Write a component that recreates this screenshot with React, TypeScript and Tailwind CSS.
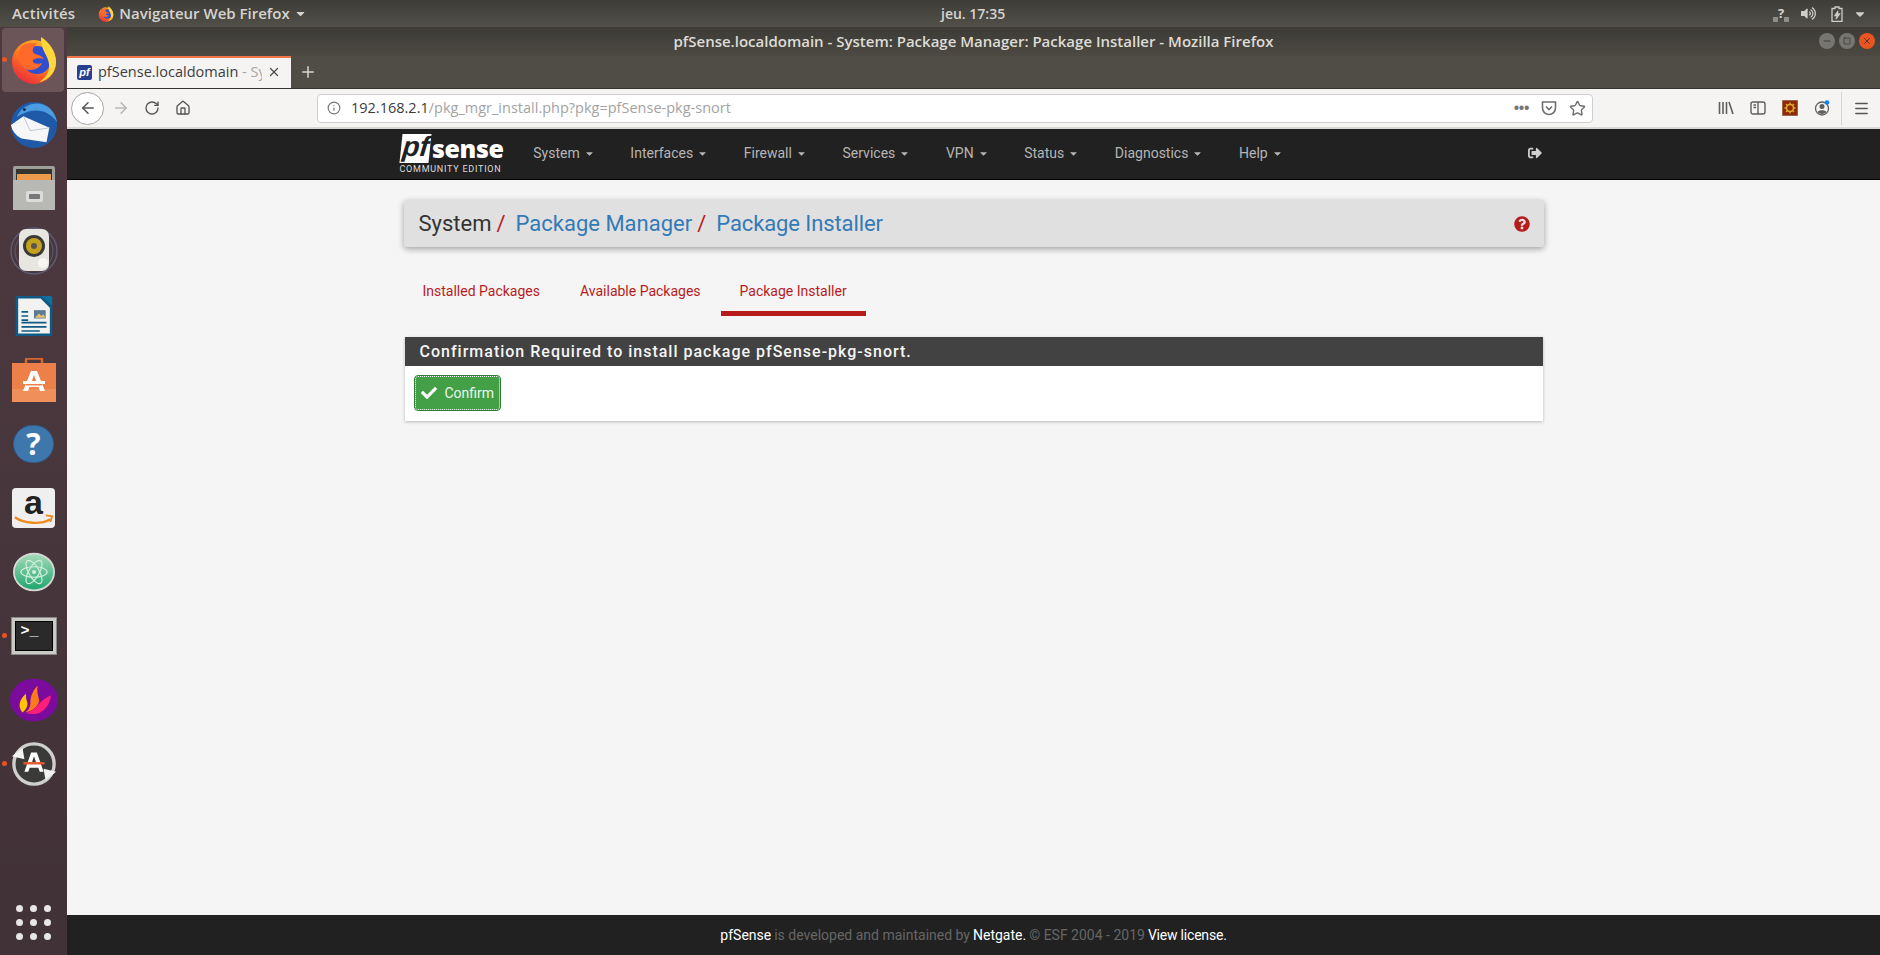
import { ArrowLeft, ArrowRight, RotateCw, Home, Info, Star, Minus, Square, X, Plus, Menu } from "lucide-react";
import { FaCheck, FaQuestionCircle, FaSignOutAlt, FaVolumeUp, FaCaretDown } from "react-icons/fa";

const NAV = ["System", "Interfaces", "Firewall", "Services", "VPN", "Status", "Diagnostics", "Help"];

function FirefoxIcon({ size = 48 }: { size?: number }) {
  const id = `ff${size}`;
  return (
    <svg width={size} height={size} viewBox="0 0 48 48">
      <defs>
        <linearGradient id={id} x1="0.8" y1="0" x2="0.2" y2="1">
          <stop offset="0" stopColor="#ffb52e" />
          <stop offset="0.5" stopColor="#ff7a1f" />
          <stop offset="1" stopColor="#e8243f" />
        </linearGradient>
      </defs>
      <circle cx="24" cy="26" r="22" fill={`url(#${id})`} />
      <circle cx="27" cy="24" r="14" fill="#2f4fd0" />
      <path d="M12 10c5-3 10-4 15-2-3 2-5 5-4 8 1 3 8 2 11 7-3-1-9-1-11 1-1 3 4 5 9 3-2 6-13 10-19 4-6-6-6-15-1-21z" fill="#ff6a2a" />
      <path d="M31 1c8 5 15 14 15 25 0 10-7 18-17 20 7-4 11-10 10-18-1-9-9-15-8-27z" fill="#ffd73b" />
    </svg>
  );
}

function ThunderbirdIcon() {
  return (
    <svg width="48" height="48" viewBox="0 0 50 50">
      <circle cx="25" cy="26" r="24" fill="#1e5aa8" />
      <path d="M7 18c4-10 14-16 25-14 9 2 15 9 17 19-6-8-13-12-22-12-7 0-14 3-20 7z" fill="#4a9be0" />
      <path d="M1 26l13-9 27 12-3 15-26-4c-6-3-10-8-11-14z" fill="#f7f7f7" />
      <path d="M14 17l7 15 20-3" fill="none" stroke="#b9c4d0" strokeWidth="1" />
      <circle cx="15" cy="10" r="1.500" fill="#10233f" />
    </svg>
  );
}

function FilesIcon() {
  return (
    <svg width="42" height="44" viewBox="0 0 42 44">
      <rect x="0" y="0" width="42" height="44" rx="2" fill="#9e9e9b" />
      <rect x="3" y="3" width="36" height="14" fill="#35342f" />
      <rect x="4" y="8" width="34" height="9" fill="#ee9a4d" />
      <rect x="0" y="14" width="42" height="30" rx="1" fill="#b8b8b5" />
      <rect x="13" y="25" width="17" height="11" rx="2" fill="#dcdcda" />
      <rect x="16" y="28" width="11" height="5" rx="1" fill="#77777a" />
    </svg>
  );
}

function RhythmboxIcon() {
  return (
    <svg width="50" height="50" viewBox="0 0 50 50">
      <circle cx="25" cy="24" r="23" fill="none" stroke="#5d5c72" strokeWidth="1.500" />
      <circle cx="25" cy="24" r="19" fill="none" stroke="#5d5c72" strokeWidth="1" />
      <rect x="10" y="2" width="30" height="42" rx="7" fill="#e7e6e0" />
      <circle cx="25" cy="19" r="11" fill="#3a3a36" />
      <circle cx="25" cy="19" r="8" fill="#c5a21e" />
      <circle cx="25" cy="19" r="3" fill="#56564f" />
      <circle cx="34" cy="36" r="5" fill="#f7f7f4" />
    </svg>
  );
}

function WriterIcon() {
  return (
    <svg width="40" height="50" viewBox="0 0 48 52">
      <path d="M2 2h32l12 12v34a2 2 0 0 1-2 2H2z" fill="#0f5b85" />
      <path d="M5 5h27l11 11v31H5z" fill="#f2f2f0" />
      <path d="M33 2h11a2 2 0 0 1 2 2v10z" fill="#0f6f9f" />
      <rect x="24" y="19" width="14" height="10" fill="#5b7a95" />
      <path d="M25 28l5-5 3 3 2-2 3 4z" fill="#e8c26f" />
      <path d="M9 20h8v2H9zM9 25h8v2H9zM9 30h8v2H9zM9 33h30v2H9zM9 38h30v2H9zM9 43h22v2H9z" fill="#0f5b85" />
    </svg>
  );
}

function SoftwareIcon() {
  return (
    <svg width="44" height="44" viewBox="0 0 44 44">
      <path d="M14 7V2a1.500 1.500 0 0 1 1.500-1.500h13A1.500 1.500 0 0 1 30 2v5" fill="none" stroke="#d8652b" strokeWidth="2.500" />
      <rect x="0" y="5" width="44" height="39" fill="#ec8048" />
      <rect x="0" y="31" width="44" height="13" fill="#f08f5a" />
      <path fillRule="evenodd" d="M19 13h6l8 20h-5l-1.500-4h-9L16 33h-5zM22 17l-2.500 7h5z" fill="#fff" />
      <rect x="11" y="23" width="22" height="3" fill="#fff" />
      <rect x="14" y="26" width="16" height="1.500" fill="#ec8048" />
    </svg>
  );
}

function HelpIcon() {
  return (
    <div className="w-[41px] h-[38px] rounded-full bg-[#3e77ac] border border-[#2d5d8f] flex items-center justify-center">
      <span className="text-white font-bold text-[30px] leading-none font-['Open_Sans',sans-serif]">?</span>
    </div>
  );
}

function AmazonIcon() {
  return (
    <div className="relative w-[43px] h-[40px] rounded-sm bg-[#efefef] flex justify-center">
      <span className="text-[#222] font-bold text-[34px] leading-[28px] font-['Liberation_Sans',sans-serif]">a</span>
      <svg className="absolute left-0 bottom-0" width="43" height="14" viewBox="0 0 46 14">
        <path d="M3 3c10 7 28 8 38 2" fill="none" stroke="#f08a1d" strokeWidth="2.500" />
        <path d="M36 1l7 1-2 6" fill="none" stroke="#f08a1d" strokeWidth="2" />
      </svg>
    </div>
  );
}

function AtomIcon() {
  return (
    <svg width="42" height="40" viewBox="0 0 48 44">
      <defs>
        <linearGradient id="atomBg" x1="0" y1="0" x2="0" y2="1">
          <stop offset="0" stopColor="#a7dcb9" />
          <stop offset="1" stopColor="#1da56e" />
        </linearGradient>
      </defs>
      <ellipse cx="24" cy="22" rx="23" ry="21" fill="url(#atomBg)" stroke="#d9d9d4" strokeWidth="2" />
      <g fill="none" stroke="#d5f0df" strokeWidth="1.300">
        <ellipse cx="24" cy="22" rx="15" ry="6" />
        <ellipse cx="24" cy="22" rx="15" ry="6" transform="rotate(60 24 22)" />
        <ellipse cx="24" cy="22" rx="15" ry="6" transform="rotate(-60 24 22)" />
      </g>
      <circle cx="24" cy="22" r="2.200" fill="#d5f0df" />
    </svg>
  );
}

function TerminalIcon() {
  return (
    <div className="w-[46px] h-[38px] bg-[#c9c9c6] p-[3px] border border-[#8a8a88]">
      <div className="w-full h-full bg-[#2a2a2a] border border-black pl-[5px] flex items-start">
        <span className="text-white font-bold text-[15px] leading-[20px] font-['Liberation_Mono',monospace]">&gt;_</span>
      </div>
    </div>
  );
}

function FlameIcon() {
  return (
    <svg width="48" height="44" viewBox="0 0 54 48">
      <ellipse cx="27" cy="24" rx="27" ry="24" fill="#7b0b9c" />
      <path d="M14 38c-6-7-3-15 4-21 0 4 0 6 1 8 2 5-1 10-5 13z" fill="#ffc400" />
      <path d="M16 38c6-2 7-7 7-12 0-6 3-13 8-18 -1 8 1 12 2 17-2 7-9 12-17 13z" fill="#ff7a1a" />
      <path d="M18 39c7-3 11-6 15-11 3-3 9-8 13-9-1 9-6 16-12 19-5 2-10 2-16 1z" fill="#ff1e7a" />
    </svg>
  );
}

function UpdateIcon() {
  return (
    <svg width="46" height="46" viewBox="0 0 48 48">
      <circle cx="24" cy="24" r="20" fill="#3a3a38" />
      <circle cx="24" cy="24" r="21" fill="none" stroke="#cfcfcd" strokeWidth="3.500" />
      <path d="M1 16l11-9 2 12z" fill="#f2f2f0" />
      <path d="M47 32l-11 9-2-12z" fill="#f2f2f0" />
      <path fillRule="evenodd" d="M21 12h6l7 20h-4l-1.500-4h-9L18 32h-4zM24 16l-2 6h4z" fill="#fff" />
      <rect x="13" y="22" width="22" height="2.500" fill="#e9562b" />
    </svg>
  );
}

function PocketIcon() {
  return (
    <svg width="16" height="16" viewBox="0 0 16 16" fill="none" stroke="#6f6f6f" strokeWidth="1.600">
      <path d="M1.500 2h13v6a6.500 6.500 0 0 1-13 0z" />
      <path d="M5 6.500l3 3 3-3" />
    </svg>
  );
}

function LibraryIcon() {
  return (
    <svg width="16" height="16" viewBox="0 0 16 16" stroke="#5f5f5f" strokeWidth="1.600" fill="none">
      <path d="M1.500 2v12M5 2v12M8.500 2v12M11 2l4 12" />
    </svg>
  );
}

function SidebarIcon() {
  return (
    <svg width="16" height="16" viewBox="0 0 16 16" stroke="#5f5f5f" strokeWidth="1.400" fill="none">
      <rect x="1" y="2" width="14" height="12" rx="2" />
      <path d="M8 2v12M3.500 5h2.500M3.500 7.500h2.500" />
    </svg>
  );
}

function ExtensionIcon() {
  return (
    <svg width="16" height="16" viewBox="0 0 16 16">
      <rect width="16" height="16" fill="#8d2a04" stroke="#a9a39a" />
      <circle cx="8" cy="8" r="3.500" fill="none" stroke="#e0a82e" strokeWidth="1.600" />
      <path d="M8 2.500v2M8 11.500v2M2.500 8h2M11.500 8h2M4 4l1.500 1.500M10.500 10.500L12 12M12 4l-1.500 1.500M5.500 10.500L4 12" stroke="#e0a82e" strokeWidth="1.400" />
    </svg>
  );
}

function AccountIcon() {
  return (
    <svg width="16" height="16" viewBox="0 0 16 16" fill="none">
      <circle cx="8" cy="8.500" r="6.500" stroke="#5f5f5f" strokeWidth="1.300" />
      <circle cx="8" cy="6.500" r="2.500" fill="#5f5f5f" />
      <path d="M3.500 12c1.500-2.500 7.500-2.500 9 0-2 2.500-7 2.500-9 0z" fill="#5f5f5f" />
      <circle cx="13" cy="2.500" r="2.300" fill="#0a84ff" />
    </svg>
  );
}

function NetworkIcon() {
  return (
    <div className="relative w-[16px] h-[16px]">
      <div className="absolute left-0 bottom-0 w-[5px] h-[5px] bg-[#8f8e89]" />
      <div className="absolute right-0 bottom-0 w-[5px] h-[5px] bg-[#8f8e89]" />
      <span className="absolute inset-x-0 -top-[1px] text-center text-[13px] leading-[16px] font-bold text-[#d6d4cf]">?</span>
    </div>
  );
}

function PfTabIcon() {
  return (
    <div className="w-[15px] h-[15px] rounded-[2px] bg-[#27408f] flex items-center justify-center shrink-0">
      <span className="text-white font-bold italic text-[11px] leading-none font-['Liberation_Sans',sans-serif]">pf</span>
    </div>
  );
}

function DockItem({ children, active, running }: { children: React.ReactNode; active?: boolean; running?: boolean }) {
  return (
    <div className="relative h-[64px] flex items-center justify-center">
      {active && <div className="absolute left-[2px] right-[3px] inset-y-0 rounded bg-[#6c5559]" />}
      {running && <div className="absolute left-[2px] top-[29px] w-[5px] h-[5px] rounded-full bg-[#e95420]" />}
      <div className="relative">{children}</div>
    </div>
  );
}

function Dock() {
  return (
    <aside className="w-[67px] shrink-0 bg-[linear-gradient(#4d3a40,#413238)] pt-px flex flex-col">
      <DockItem active running><FirefoxIcon /></DockItem>
      <DockItem><ThunderbirdIcon /></DockItem>
      <DockItem><FilesIcon /></DockItem>
      <DockItem><RhythmboxIcon /></DockItem>
      <DockItem><WriterIcon /></DockItem>
      <DockItem><SoftwareIcon /></DockItem>
      <DockItem><HelpIcon /></DockItem>
      <DockItem><AmazonIcon /></DockItem>
      <DockItem><AtomIcon /></DockItem>
      <DockItem running><TerminalIcon /></DockItem>
      <DockItem><FlameIcon /></DockItem>
      <DockItem running><UpdateIcon /></DockItem>
      <div className="mt-auto mb-[15px] grid grid-cols-3 gap-[7px] w-[35px] mx-auto">
        {Array.from({ length: 9 }).map((_, i) => (
          <div key={i} className="w-[7px] h-[7px] rounded-full bg-[#e8e6e6]" />
        ))}
      </div>
    </aside>
  );
}

function TopBar() {
  return (
    <header className="h-[27px] shrink-0 flex items-center bg-[linear-gradient(#3e3d38,#514f48)] text-[#d6d4cf] text-[15px] font-semibold font-['Open_Sans',sans-serif]">
      <div className="w-[941px] flex items-center shrink-0">
        <span className="ml-[12px] tracking-[0.2px]">Activités</span>
        <span className="ml-[23px]"><FirefoxIcon size={16} /></span>
        <span className="ml-[5px]">Navigateur Web Firefox</span>
        <FaCaretDown className="ml-[4px]" size={13} />
      </div>
      <span className="text-[14px]">jeu. 17:35</span>
      <div className="ml-auto flex items-center pr-[13px] text-[#cfcdc8]">
        <NetworkIcon />
        <FaVolumeUp className="ml-[12px]" size={15} />
        <svg className="ml-[15px]" width="12" height="16" viewBox="0 0 12 16" fill="none" stroke="#cfcdc8" strokeWidth="1.300">
          <path d="M4 1h4v1.500h3v13H1v-13h3zM7 5L4 9.500h2.500L5 13l3.500-5H6z" />
        </svg>
        <FaCaretDown className="ml-[10px]" size={14} />
      </div>
    </header>
  );
}

function BrowserChrome() {
  return (
    <div className="shrink-0">
      <div className="relative h-[29px] flex items-center justify-center bg-[linear-gradient(#3c3b35,#4b4942)] text-[#dedcd6] text-[15px] font-semibold font-['Open_Sans',sans-serif]">
        pfSense.localdomain - System: Package Manager: Package Installer - Mozilla Firefox
        <div className="absolute right-[5px] top-[6px] flex gap-[4px]">
          <div className="w-[16px] h-[16px] rounded-full bg-[#76756f] flex items-center justify-center">
            <Minus size={10} color="#33322e" />
          </div>
          <div className="w-[16px] h-[16px] rounded-full bg-[#76756f] flex items-center justify-center">
            <Square size={8} color="#33322e" />
          </div>
          <div className="w-[16px] h-[16px] rounded-full bg-[#e95420] flex items-center justify-center">
            <X size={10} color="#33322e" />
          </div>
        </div>
      </div>
      <div className="h-[32px] flex bg-[#4f4d46]">
        <div className="w-[224px] border-t-2 border-[#f0764a] bg-[#f5f4f3] flex items-center pl-[10px] pb-[2px] font-['Open_Sans',sans-serif] text-[14.500px] text-[#3d3d3d]">
          <PfTabIcon />
          <span className="ml-[6px] w-[164px] whitespace-nowrap overflow-hidden">
            pfSense.localdomain <span className="text-[#a5a5a5]">- System</span>
          </span>
          <X className="ml-[5px]" size={14} color="#4d4d4d" strokeWidth={2.200} />
        </div>
        <div className="w-[34px] flex items-center justify-center">
          <Plus size={18} color="#d8d6d0" />
        </div>
      </div>
      <div className="h-[41px] flex items-center bg-[#f5f4f3] border-t border-[#35342f] border-b-2 border-b-[#d8d7d4]">
        <div className="ml-[4px] w-[33px] h-[33px] rounded-full bg-white border border-[#a6a6a6] flex items-center justify-center">
          <ArrowLeft size={18} color="#555" />
        </div>
        <ArrowRight className="ml-[8px]" size={18} color="#b5b5b5" />
        <RotateCw className="ml-[14px]" size={16} color="#555" />
        <Home className="ml-[15px]" size={16} color="#555" />
        <div className="ml-[126px] w-[1276px] h-[29px] shrink-0 rounded bg-white border border-[#cfcfcf] flex items-center font-['Open_Sans',sans-serif] text-[14.500px] text-[#a3a3a3]">
          <Info className="ml-[9px]" size={14} color="#777" />
          <span className="ml-[10px]">
            <span className="text-[#3c3c3c]">192.168.2.1</span>/pkg_mgr_install.php?pkg=pfSense-pkg-snort
          </span>
          <span className="ml-auto tracking-tight font-bold text-[#777] leading-none">•••</span>
          <span className="ml-[12px]"><PocketIcon /></span>
          <Star className="ml-[12px] mr-[6px]" size={17} color="#6f6f6f" strokeWidth={2} />
        </div>
        <div className="ml-auto flex items-center gap-[16px] pr-[10px]">
          <LibraryIcon />
          <SidebarIcon />
          <ExtensionIcon />
          <AccountIcon />
          <div className="-ml-[5px] h-[33px] w-px bg-[#d5d5d3]" />
          <Menu className="-ml-[5px]" size={17} color="#555" />
        </div>
      </div>
    </div>
  );
}

function Navbar() {
  return (
    <nav className="h-[51px] shrink-0 bg-[#212121] border-b border-black">
      <div className="w-[1170px] h-full mx-auto px-[12px] flex items-center">
        <div className="w-[103px] shrink-0 flex flex-col text-white">
          <div className="flex items-center h-[29px]">
            <div className="w-[30px] h-[29px] bg-white -skew-x-6 flex items-center justify-center">
              <span className="text-[#212121] font-bold italic text-[28px] leading-none font-['Liberation_Sans',sans-serif] -mt-[3px]">pf</span>
            </div>
            <span className="ml-[2px] font-extrabold text-[25px] leading-none tracking-[-0.4px] font-['Open_Sans',sans-serif]">sense</span>
          </div>
          <span className="-ml-[1px] text-[9px] tracking-[0.75px] leading-[12px] text-[#dddddd] whitespace-nowrap font-['Roboto',sans-serif]">
            COMMUNITY EDITION
          </span>
        </div>
        <ul className="ml-[12px] -mt-[2px] flex font-['Roboto',sans-serif] text-[14px] text-[#b5b5b5]">
          {NAV.map((item) => (
            <li key={item} className="px-[17.800px] flex items-center">
              {item}
              <FaCaretDown className="ml-[4px]" size={11} />
            </li>
          ))}
        </ul>
        <FaSignOutAlt className="ml-auto mr-[5px] -mt-[2px]" size={14} color="#cfcfcf" />
      </div>
    </nav>
  );
}

function Content() {
  return (
    <main className="flex-1 bg-[#f5f5f5] font-['Roboto',sans-serif]">
      <div className="w-[1170px] mx-auto px-[15px] pt-[20px]">
        <div className="h-[47px] bg-[#e0e0e0] rounded-[3px] shadow-[0_2px_6px_rgba(0,0,0,0.35)] flex items-center pl-[15px] pr-[14px] text-[22px] text-[#337ab7]">
          <span className="text-[#333]">System</span>
          <span className="ml-[5px] text-[#b71c1c]">/</span>
          <span className="ml-[10px]">Package Manager</span>
          <span className="ml-[5px] text-[#b71c1c]">/</span>
          <span className="ml-[10px] tracking-[-0.1px]">Package Installer</span>
          <FaQuestionCircle className="ml-auto" size={16} color="#b71c1c" />
        </div>
        <ul className="mt-[21px] h-[48px] flex text-[14px] text-[#b71c1c]">
          <li className="px-[19px] pt-[13px]">Installed Packages</li>
          <li className="ml-[2px] px-[19px] pt-[13px]">Available Packages</li>
          <li className="ml-[1px] px-[19px] pt-[13px] border-b-[5px] border-[#b71c1c]">Package Installer</li>
        </ul>
        <section className="mt-[21px] ml-[1px] mr-[1px] bg-white shadow-[0_1px_3px_rgba(0,0,0,0.25)]">
          <h2 className="h-[29px] bg-[#424242] pl-[15px] flex items-center text-[16px] font-medium tracking-[1px] text-[#f5f5f5]">
            Confirmation Required to install package pfSense-pkg-snort.
          </h2>
          <div className="h-[55px] pt-[10px] pl-[10px]">
            <button className="w-[85px] h-[34px] rounded-[3px] bg-[#43a047] border border-dotted border-white outline outline-[#2e7d32] flex items-center pl-[5px] text-[14px] text-[#e9f6ea]">
              <FaCheck size={16} color="#fff" />
              <span className="ml-[8px]">Confirm</span>
            </button>
          </div>
        </section>
      </div>
    </main>
  );
}

function Footer() {
  return (
    <footer className="h-[40px] shrink-0 bg-[#212121] flex items-center justify-center font-['Roboto',sans-serif] text-[14px] text-[#666666]">
      <span className="text-white">pfSense</span>
      <span className="ml-[3px]">is developed and maintained by</span>
      <span className="ml-[3px] text-white">Netgate.</span>
      <span className="ml-[3px]">© ESF 2004 - 2019</span>
      <span className="ml-[3px] text-white tracking-[-0.2px]">View license.</span>
    </footer>
  );
}

export default function App() {
  return (
    <div className="w-[1880px] h-[955px] flex flex-col overflow-hidden">
      <TopBar />
      <div className="flex-1 flex min-h-0">
        <Dock />
        <div className="flex-1 flex flex-col min-w-0">
          <BrowserChrome />
          <Navbar />
          <Content />
          <Footer />
        </div>
      </div>
    </div>
  );
}
